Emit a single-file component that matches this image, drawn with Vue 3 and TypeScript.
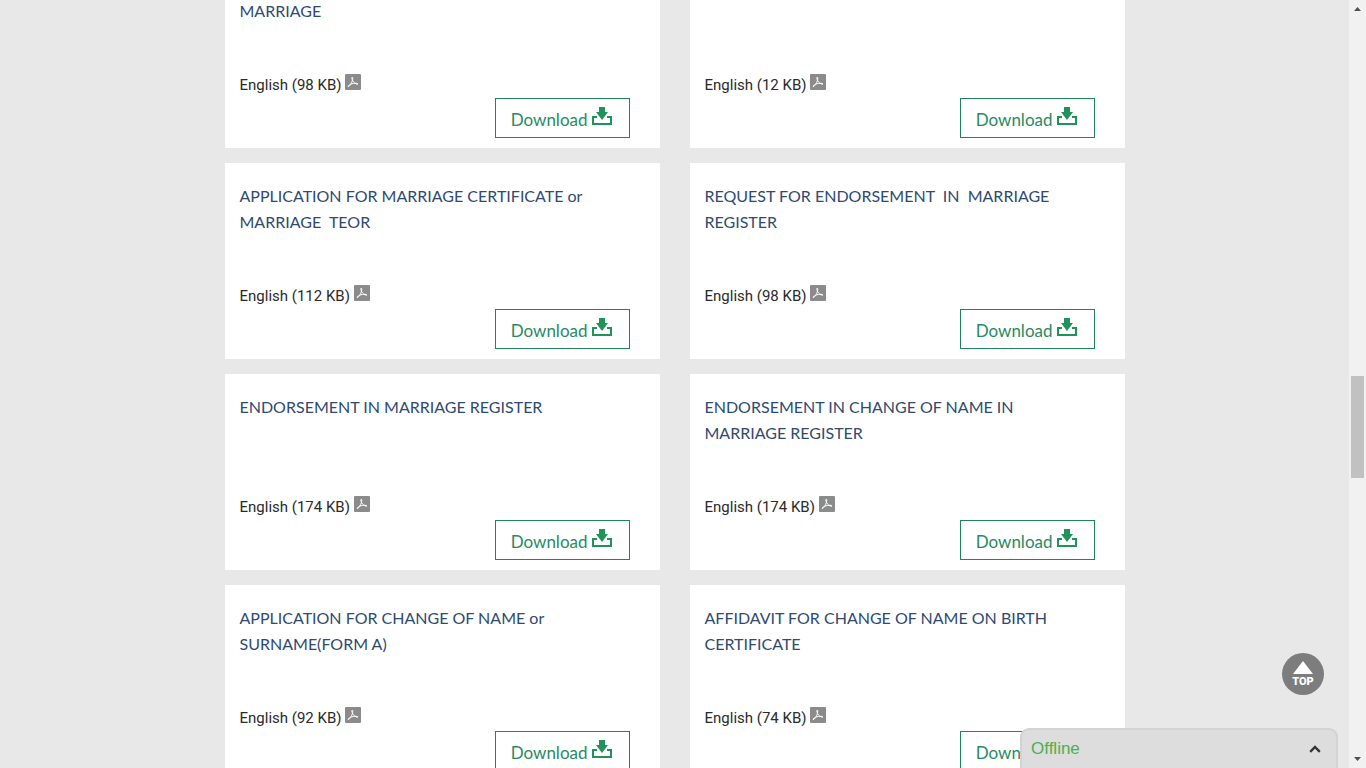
<script setup lang="ts">
interface FormItem {
  title: string
  size: string
}

const forms: FormItem[] = [
  { title: '\nMARRIAGE', size: '98 KB' },
  { title: '', size: '12 KB' },
  { title: 'APPLICATION FOR MARRIAGE CERTIFICATE or MARRIAGE  TEOR', size: '112 KB' },
  { title: 'REQUEST FOR ENDORSEMENT  IN  MARRIAGE REGISTER', size: '98 KB' },
  { title: 'ENDORSEMENT IN MARRIAGE REGISTER', size: '174 KB' },
  { title: 'ENDORSEMENT IN CHANGE OF NAME IN MARRIAGE REGISTER', size: '174 KB' },
  { title: 'APPLICATION FOR CHANGE OF NAME or SURNAME(FORM A)', size: '92 KB' },
  { title: 'AFFIDAVIT FOR CHANGE OF NAME ON BIRTH CERTIFICATE', size: '74 KB' },
]
</script>

<template>
  <div class="page">
    <main class="content">
      <ul class="forms">
        <li v-for="(form, i) in forms" :key="i" class="card">
          <h2 class="title">{{ form.title }}</h2>
          <p class="file">
            <span>English ({{ form.size }})</span>
            <svg class="pdf" viewBox="0 0 16 16" aria-hidden="true">
              <rect width="16" height="16" rx="1" fill="#8b8b8b" />
              <path
                d="M7 3.200C8.200 3.200 7.800 5 7.300 6.800C6.500 9.400 5 12 3.200 12.600C3 11.500 4.800 10.400 6.800 9.800C9.200 9.100 12.400 8.900 13 10C12.600 10.800 9.800 9.600 8.400 7.800C7.200 6.300 6.500 3.800 7 3.200Z"
                fill="none"
                stroke="#fff"
                stroke-width="1"
              />
            </svg>
          </p>
          <a class="download" href="#">
            <span>Download</span>
            <svg class="tray" viewBox="0 0 20 18" aria-hidden="true">
              <path d="M7 0h6v5h3l-6 8l-6-8h3z" fill="#21935a" />
              <path d="M5 10H1v7h18v-7h-4" fill="none" stroke="#21935a" stroke-width="2" />
            </svg>
          </a>
        </li>
      </ul>
    </main>

    <div class="scrollbar" aria-hidden="true">
      <svg class="arrow" viewBox="0 0 17 17"><path d="M5 11h7L8.500 7z" fill="#505050" /></svg>
      <div class="track"><div class="thumb"></div></div>
      <svg class="arrow" viewBox="0 0 17 17"><path d="M5 6h7L8.500 10z" fill="#505050" /></svg>
    </div>

    <button class="top" type="button">
      <svg class="up" viewBox="0 0 20 13" aria-hidden="true"><path d="M10 0L20 13H0z" fill="#fff" /></svg>
      <span>TOP</span>
    </button>

    <button class="chat" type="button">
      <span>Offline</span>
      <svg class="chevron" viewBox="0 0 12 8" aria-hidden="true">
        <path d="M1.200 6.800L6 2L10.800 6.800" fill="none" stroke="#333" stroke-width="2.400" />
      </svg>
    </button>
  </div>
</template>

<style>
body {
  margin: 0;
  background: #e8e8e8;
}
</style>

<style scoped>
.page {
  display: flex;
  height: 100vh;
  overflow: hidden;
  background: #e8e8e8;
}

.content {
  flex: 1;
  min-width: 0;
}

.forms {
  display: grid;
  grid-template-columns: 1fr 1fr;
  gap: 15px 30px;
  max-width: 900px;
  margin: -48px auto 0;
  padding: 0;
  list-style: none;
}

.card {
  display: flex;
  flex-direction: column;
  box-sizing: border-box;
  padding: 20px 30px 10px 15px;
  background: #fff;
}

.title {
  min-height: 78px;
  margin: 0 30px 0 0;
  color: #2f4a70;
  font: 400 16px/26px Lato, "Open Sans", sans-serif;
  white-space: pre-wrap;
}

.file {
  display: flex;
  gap: 4px;
  margin: 24px 0 0;
  color: #2a2a2a;
  font: 400 15px/22px Roboto, sans-serif;
}

.pdf {
  width: 16px;
  height: 16px;
}

.download {
  display: flex;
  align-self: flex-end;
  align-items: flex-start;
  gap: 4px;
  box-sizing: border-box;
  height: 40px;
  margin-top: 2px;
  padding: 8px 17px 0 15px;
  border: 1px solid #21835a;
  color: #298a62;
  font: 400 17px/26px Lato, "Open Sans", sans-serif;
  text-decoration: none;
}

.tray {
  width: 20px;
  height: 18px;
}

.scrollbar {
  display: flex;
  flex-direction: column;
  width: 17px;
  background: #f1f1f1;
}

.arrow {
  width: 17px;
  height: 17px;
}

.track {
  display: grid;
  flex: 1;
  grid-template-rows: 359fr 102fr 273fr;
  padding: 0 2px;
}

.thumb {
  grid-row: 2;
  background: #c1c1c1;
}

.top {
  position: fixed;
  right: 42px;
  bottom: 73px;
  display: flex;
  flex-direction: column;
  align-items: center;
  gap: 2px;
  width: 42px;
  height: 42px;
  padding: 8px 0 0;
  border: 0;
  border-radius: 50%;
  background: #7d7d7d;
  color: #fff;
  font: 900 11px/12px Roboto, sans-serif;
}

.up {
  width: 20px;
  height: 13px;
  flex: none;
}

.chat {
  position: fixed;
  right: 28px;
  bottom: 0;
  display: flex;
  align-items: center;
  justify-content: space-between;
  box-sizing: border-box;
  width: 318px;
  height: 40px;
  padding: 0 15px 0 9px;
  border: 2px solid #d3d3d3;
  border-bottom: 0;
  border-radius: 9px 9px 0 0;
  background: #ddd;
  color: #4caf50;
  font: 400 17px/20px "Liberation Sans", Arial, sans-serif;
}

.chevron {
  width: 12px;
  height: 8px;
}
</style>
